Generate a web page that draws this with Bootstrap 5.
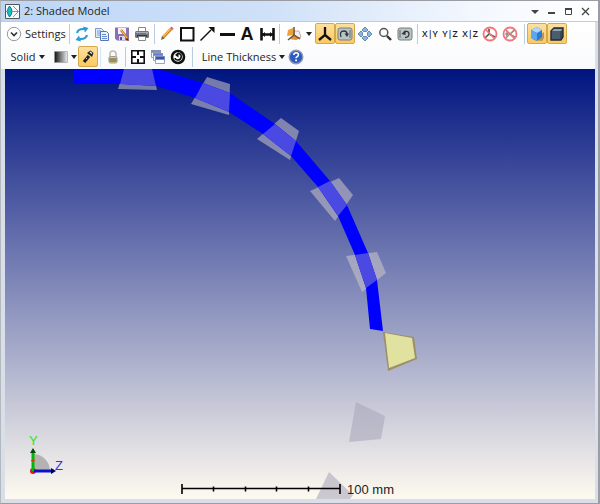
<!DOCTYPE html>
<html lang="en">
<head>
<meta charset="utf-8">
<meta name="viewport" content="width=device-width, initial-scale=1">
<title>2: Shaded Model</title>
<link href="https://cdn.jsdelivr.net/npm/bootstrap@5.3.0/dist/css/bootstrap.min.css" rel="stylesheet">
<style>
body { font: 11px/16px "Open Sans", "Noto Sans", sans-serif; color: #1e1e1e; background: #d8dfe9; }
.win { border: 1px solid #9a9da3; border-right-width: 2px; border-left-color: #b4b8bf; }
.titlebar { height: 21px; background: linear-gradient(90deg, #bdd6f6, #cfe1f8 45%, #f4f8fe 80%, #fff); border-bottom: 1px solid #b9cfe6; }
.titlebar h1 { font-size: 11px; line-height: 16px; }
.tools { background: linear-gradient(#fff, #f9fafb); height: 47px; margin-right: 3px; padding: 0 0 1px 3px; }
.toolrow { height: 23px; }
.tb { width: 20px; height: 21px; padding: 0; border: 0; background: none; color: #1e1e1e; display: flex; align-items: center; justify-content: center; flex: none; white-space: nowrap; }
.tb svg { width: 16px; height: 16px; display: block; flex: none; }
.tb.on { border: 1px solid #d3a94c; border-radius: 2px; background: linear-gradient(#fbe0a0, #fcc960); }
.tb.settings { width: 63px; justify-content: flex-start; gap: 3px; padding-left: 2px; }
.tb.view { width: 33px; gap: 4px; }
.tb.solid { width: 48px; gap: 4px; }
.tb.shade { width: 26px; gap: 2px; }
.tb.thick { width: 91px; gap: 3px; padding-left: 6px; }
.tb.glyph { font: bold 18px/20px "Liberation Sans", Arial, sans-serif; color: #111; }
.axis { font-size: 9px; font-weight: 600; }
.caret { width: 0; height: 0; border: 3px solid transparent; border-top: 4px solid #222; border-bottom: 0; }
.rule { width: 1px; height: 20px; background: #b9cce0; margin: 0 2px; flex: none; }
.view3d { margin: 0 3px 4px 4px; background: linear-gradient(#001480, #fefaf0); min-height: 0; overflow: hidden; }
.view3d svg { min-height: 0; }
.winbtns .tb { width: 17px; }
.winbtns .tb svg { width: 9px; height: 9px; }
</style>
<script src="https://cdn.jsdelivr.net/npm/bootstrap@5.3.0/dist/js/bootstrap.bundle.min.js"></script>
</head>
<body>
<main class="win vh-100 d-flex flex-column">
  <header class="titlebar d-flex align-items-center flex-shrink-0 ps-1">
    <svg width="15" height="15" viewBox="0 0 15 15" aria-hidden="true"><path d="M.5.5h14v14H.5z" fill="#f5f8fc" stroke="#555"/><path d="M4.500 2q5 5.500 0 11q-4-5.500 0-11z" fill="#18c4cc" stroke="#177"/><path d="M8 2l5.500 5.500L8 13M1 7.500h12" fill="none" stroke="#77e" stroke-width=".9"/></svg>
    <h1 class="m-0 ms-1 fw-normal">2: Shaded Model</h1>
    <div class="winbtns d-flex ms-auto me-1">
      <button class="tb" aria-label="Menu"><svg viewBox="0 0 9 9"><path d="M1 3h8L5 7z" fill="#444"/></svg></button>
      <button class="tb" aria-label="Minimize"><svg viewBox="0 0 9 9"><path d="M1 5h7v2H1z" fill="#444"/></svg></button>
      <button class="tb" aria-label="Maximize"><svg viewBox="0 0 9 9"><path d="M1.500 2v5.500h6V2" fill="none" stroke="#444"/><path d="M1 1h7v2H1z" fill="#444"/></svg></button>
      <button class="tb" aria-label="Close"><svg viewBox="0 0 9 9"><path d="m1 1 7 7M8 1 1 8" stroke="#444" stroke-width="1.300"/></svg></button>
    </div>
  </header>

  <div class="tools flex-shrink-0" role="toolbar" aria-label="Viewer tools">
    <div class="toolrow d-flex align-items-center">
      <button class="tb settings"><svg viewBox="0 0 16 16"><circle cx="8" cy="8" r="6.700" fill="#fdfdfd" stroke="#999"/><path d="m5 6.500 3 3 3-3" fill="none" stroke="#333" stroke-width="1.600"/></svg>Settings</button>
      <i class="rule"></i>
      <button class="tb" aria-label="Refresh"><svg viewBox="0 0 16 16" fill="none" stroke="#2f9bd6" stroke-width="2.200"><path d="M3 7q1-4 6-4h1"/><path d="M13 9q-1 4-6 4H6"/><path d="M9 .5 14.500 2 11 6.500zM7 15.500 1.500 14 5 9.500z" fill="#2f9bd6" stroke="none"/></svg></button>
      <button class="tb" aria-label="Copy"><svg viewBox="0 0 16 16"><path d="M1.500 2.500h6l2 2v7h-8z" fill="#dfe9f8" stroke="#7c9bd0"/><path d="M3 5h4M3 7h4M3 9h4" stroke="#7c9bd0"/><path d="M6.500 5.500h6l2 2v7h-8z" fill="#eaf1fb" stroke="#5377bb"/><path d="M8 8.500h4M8 10.500h5M8 12.500h5" stroke="#6d8ec9"/></svg></button>
      <button class="tb" aria-label="Save"><svg viewBox="0 0 16 16"><path d="M1 1.500h14v13H3l-2-2z" fill="#8672b4"/><path d="M4 2h8v6H4z" fill="#f4f1fb"/><path d="M5 10h6v4H5z" fill="#ddd7ec"/><path d="M6 11h2v3H6z" fill="#5e4c8d"/><path d="m7 4 7 9" stroke="#c96f13" stroke-width="2.400"/><path d="m7 4 6 8" stroke="#ffc55c"/><path d="m13 12 2 3-3-1z" fill="#422"/></svg></button>
      <button class="tb" aria-label="Print"><svg viewBox="0 0 16 16"><path d="M4.500 1.500h7V7h-7z" fill="#fff" stroke="#888"/><rect x="1" y="5" width="14" height="7" rx="1.500" fill="#70767a"/><path d="M2 6.500h12" stroke="#aab" /><path d="M3 9h10v2H3z" fill="#33383b"/><path d="M4.500 10.500h7v4h-7z" fill="#fff" stroke="#888"/><circle cx="13" cy="7.500" r=".8" fill="#7d6"/></svg></button>
      <i class="rule"></i>
      <button class="tb" aria-label="Pencil"><svg viewBox="0 0 16 16"><path d="M4 11.500 12 3" stroke="#d27b14" stroke-width="3"/><path d="M4 11 11.500 3" stroke="#ffba4d" stroke-width="1.200"/><path d="m11 2 1.500-1.500 2.200 2.200L13 4.300z" fill="#d56452"/><path d="m3 10-1 4 3.500-1.500z" fill="#665"/></svg></button>
      <button class="tb" aria-label="Rectangle"><svg viewBox="0 0 16 16"><path d="M2 2h12.500v12.500H2z" fill="#fff" stroke="#111" stroke-width="2"/></svg></button>
      <button class="tb" aria-label="Arrow"><svg viewBox="0 0 16 16"><path d="M1.500 14.500 12 4" stroke="#111" stroke-width="1.500"/><path d="M15.500 1v6L9.500 1z" fill="#111"/></svg></button>
      <button class="tb" aria-label="Line"><svg viewBox="0 0 16 16"><path d="M1 7h15v3H1z" fill="#111"/></svg></button>
      <button class="tb glyph" aria-label="Text">A</button>
      <button class="tb" aria-label="Dimension"><svg viewBox="0 0 16 16"><path d="M2.500 2v12.500M14.500 2v12.500M3 8.500h11" stroke="#111" stroke-width="2.600"/><path d="m3 8.500 3-2.500v5zM14 8.500l-3-2.500v5z" fill="#111"/></svg></button>
      <i class="rule"></i>
      <button class="tb view" aria-label="View orientation"><svg viewBox="0 0 16 16"><path d="m1 10 1-6 5-2 1 7z" fill="#f0a038"/><path d="M8 9V5l5 0 2 6-5 2z" fill="#eee" stroke="#c99b75" stroke-width=".8"/><path d="m3 13 5-4 7 3-5 2z" fill="#ef8b2d"/><path d="M8 1v8l-6 5M8 9l6 4" fill="none" stroke="#555" stroke-width="1.500"/></svg><i class="caret"></i></button>
      <button class="tb on" aria-label="Axes"><svg viewBox="0 0 16 16"><path d="M8 1v8L2 14M8 9l6 5" fill="none" stroke="#111" stroke-width="2.300"/></svg></button>
      <button class="tb on" aria-label="Rotate view"><svg viewBox="0 0 16 16"><rect x="1" y="2" width="14" height="12" rx="2" fill="#b9c4c4" stroke="#75807f"/><path d="M4 11Q2 5 7 5q3 0 3 3" fill="none" stroke="#333" stroke-width="1.300"/><path d="M7.500 7.500h4.500L10 11z" fill="#333"/><path d="M13 4v8" stroke="#667"/></svg></button>
      <button class="tb" aria-label="Pan"><svg viewBox="0 0 16 16" fill="#8ab6de" stroke="#4a739d" stroke-width=".8"><path d="m8 1 3 3-1.500 1.500h-3L5 4zM8 15l3-3-1.500-1.500h-3L5 12zM1 8l3-3 1.500 1.500v3L4 11zM15 8l-3-3-1.500 1.500v3L12 11z"/></svg></button>
      <button class="tb" aria-label="Zoom"><svg viewBox="0 0 16 16" fill="none" stroke="#555"><circle cx="6.800" cy="6.500" r="4" stroke-width="1.500" fill="#f8fbfd"/><path d="m10 10 4 4" stroke="#333" stroke-width="2.400"/></svg></button>
      <button class="tb" aria-label="Reset view"><svg viewBox="0 0 16 16"><rect x="1" y="2" width="14" height="12" rx="2" fill="#b9c4c4" stroke="#75807f"/><path d="M3 4v8" stroke="#667"/><path d="M7 6q5-2 5 2.500-.5 3-4 3" fill="none" stroke="#333" stroke-width="1.300"/><path d="M8.500 4v5L4.500 8z" fill="#333"/></svg></button>
      <i class="rule"></i>
      <button class="tb axis">X|Y</button>
      <button class="tb axis">Y|Z</button>
      <button class="tb axis">X|Z</button>
      <button class="tb" aria-label="Hide axes"><svg viewBox="0 0 16 16" fill="none"><path d="M7 3v5l-4 4M7 8l6 3" stroke="#555" stroke-width="1.700"/><circle cx="8" cy="8" r="6.500" stroke="#f2767a" stroke-width="1.800"/><path d="m3.500 3.500 9 9" stroke="#f2767a" stroke-width="1.700"/></svg></button>
      <button class="tb" aria-label="Hide rays"><svg viewBox="0 0 16 16" fill="none"><path d="M3 8h5l5-4M8 8l5 3M5 5v6" stroke="#777" stroke-width="1.200"/><circle cx="8" cy="8" r="6.500" stroke="#f2767a" stroke-width="1.800"/><path d="m3.500 3.500 9 9" stroke="#f2767a" stroke-width="1.700"/><path d="m12 4-8 8" stroke="#a88" stroke-width="1.200"/></svg></button>
      <i class="rule ms-1"></i>
      <button class="tb on" aria-label="Solid shading"><svg viewBox="0 0 16 16"><path d="m4 14 9 1 2-3V6z" fill="#655b3d" opacity=".5"/><path d="m2 4 6-3 5 3v7l-5 4-6-3z" fill="#2d79d6"/><path d="m2 4 6-3 5 3-5 3z" fill="#a9d7fb"/><path d="M2 4l6 3v8l-6-3z" fill="#5ba8ef"/></svg></button>
      <button class="tb on" aria-label="Edges"><svg viewBox="0 0 16 16"><path d="M2 14V5l3-3h9v9l-2 3z" fill="#4b5d6c" stroke="#202b35" stroke-width="1.400"/><path d="m3 5 2-2h8l-1 2z" fill="#93a6b3"/><path d="M12 5v9" stroke="#27323c"/></svg></button>
    </div>
    <div class="toolrow d-flex align-items-center">
      <button class="tb solid">Solid<i class="caret"></i></button>
      <button class="tb shade" aria-label="Background"><svg viewBox="0 0 16 16"><defs><linearGradient id="gr"><stop stop-color="#111"/><stop offset="1" stop-color="#eee"/></linearGradient></defs><path d="M1.500 2.500h13v11h-13z" fill="url(#gr)" stroke="#999" stroke-width=".6"/></svg><i class="caret"></i></button>
      <button class="tb on" aria-label="Lighting"><svg viewBox="0 0 16 16"><path d="m4 13 5-6" stroke="#222" stroke-width="3.200"/><path d="m7 4 5 4 1.500-4-3-2.500z" fill="#222"/><path d="m10 3 2 1.500" stroke="#eee" stroke-width="1.400"/><path d="m6 9 1 1" stroke="#ddd"/></svg></button>
      <i class="rule opacity-50"></i>
      <button class="tb" aria-label="Lock"><svg viewBox="0 0 16 16"><path d="M5 8V5q0-3 3-3t3 3v3" fill="none" stroke="#bbb" stroke-width="1.600"/><rect x="4" y="7.500" width="8" height="6.500" rx="1.500" fill="#ddd08c" stroke="#9d9a8c"/><path d="M4.500 10h7M4.500 12h7" stroke="#554c30" stroke-width="1.200"/></svg></button>
      <i class="rule"></i>
      <button class="tb" aria-label="Fit window"><svg viewBox="0 0 16 16" fill="none" stroke="#111"><path d="M1.800 1.800h12.400v12.400H1.800z" stroke-width="1.600" fill="#fff"/><path d="M8 1v5M8 10v5M1 8h5M10 8h5" stroke-width="2"/></svg></button>
      <button class="tb" aria-label="Windows"><svg viewBox="0 0 16 16" stroke="#7f8db5" stroke-width=".8"><path d="M1.500 1.500h9v7h-9z" fill="#fff"/><path d="M1.500 1.500h9v2h-9z" fill="#8291c4"/><path d="M3.500 4.500h9v7h-9z" fill="#fff"/><path d="M3.500 4.500h9v2h-9z" fill="#6c80c2"/><path d="M5.500 7.500h9v7h-9z" fill="#fff"/><path d="M5.500 7.500h9v3h-9z" fill="#3456c0"/></svg></button>
      <button class="tb" aria-label="Update"><svg viewBox="0 0 16 16" fill="none" stroke="#111"><circle cx="8" cy="8" r="6" stroke-width="2.600" fill="#fff"/><path d="M8 4.500q3.500 0 3.200 3.500-.5 3-3.200 3t-3-2" stroke-width="1.600"/><path d="M8.500 3v5.500L5 6z" fill="#111" stroke="none"/></svg></button>
      <i class="rule ms-1"></i>
      <button class="tb thick">Line Thickness<i class="caret"></i></button>
      <button class="tb" aria-label="Help"><svg viewBox="0 0 16 16"><circle cx="8" cy="8" r="6.800" fill="#2c5bc4" stroke="#929bb0" stroke-width="1.400"/><path d="M5.700 6q.3-2.200 2.400-2.200 2.300 0 2.300 2 0 1.300-1.300 1.900Q8 8.200 8 9.300" fill="none" stroke="#fff" stroke-width="1.600"/><path d="M7.200 10.500H9v1.800H7.200z" fill="#fff"/></svg></button>
    </div>
  </div>

  <section class="view3d flex-fill d-flex" aria-label="Shaded model">
    <svg class="w-100 h-100" viewBox="5 69 590 430" role="img" aria-label="Lens array along a curved beam">
      <g fill="#cdc8c8" fill-opacity=".55">
        <path d="M124 69h28l5 21-39-1z"/>
        <path d="m207 77 23 7-1 31-38-11z"/>
        <path d="m281 118 18 13-9 29-33-21z"/>
        <path d="m339 178 14 17-18 26-25-30z"/>
        <path d="m377 252 9 21-24 19-16-36z"/>
      </g>
      <path fill="#0000ff" d="M74 69H157L203 83 230 93 275 124 296 141 330 181 347 205 368 253 377 280 383 331 370 329 366 288 355 255 338 216 318 187 291 156 263 134 229 112 195 98 157 86 122 84H74z"/>
      <g fill="#4a4ae2">
        <path d="M124 69H152L156 86 120 84z"/>
        <path d="M203 83 230 93 229 112 195 98z"/>
        <path d="M275 124 296 141 291 156 263 134z"/>
        <path d="M330 181 347 205 338 216 318 187z"/>
        <path d="M368 253 377 280 366 288 355 255z"/>
      </g>
      <path d="M383 332 414 337 417 359 388 371z" fill="#9c9068"/>
      <path d="M385 333 412 338 415 358 389 368z" fill="#e2e2a0"/>
      <path d="M356 402 385 416 381 439 349 442zM329 472 353 495 350 499H316z" fill="#aaa9bb" fill-opacity=".6"/>
      <path d="M182 488.500h158M182 484v10M340 484v10M213.500 486.500v5M245.500 486.500v5M276.500 486.500v5M308.500 486.500v5" stroke="#000" stroke-width="1.600"/>
      <g font-family="Liberation Sans, Arial, sans-serif" font-size="13">
        <text x="347" y="494" fill="#222">100 mm</text>
        <text x="29" y="445" fill="#2de32d">Y</text>
        <text x="55" y="470" fill="#3333f0">Z</text>
      </g>
      <path d="M33 471v-17a17 17 0 0 1 17 17z" fill="#b3b3b3"/>
      <circle cx="33" cy="471" r="3" fill="#d81c1c"/>
      <path d="M33 471v-18" stroke="#00b800" stroke-width="3"/><path d="m30 453 3-5 3 5z" fill="#064d06"/>
      <path d="M31 460.500h4" stroke="#d33"/>
      <path d="M34 471h18" stroke="#1010c8" stroke-width="3"/><path d="m51 468 5 3-5 3z" fill="#000050"/>
    </svg>
  </section>
</main>
</body>
</html>
